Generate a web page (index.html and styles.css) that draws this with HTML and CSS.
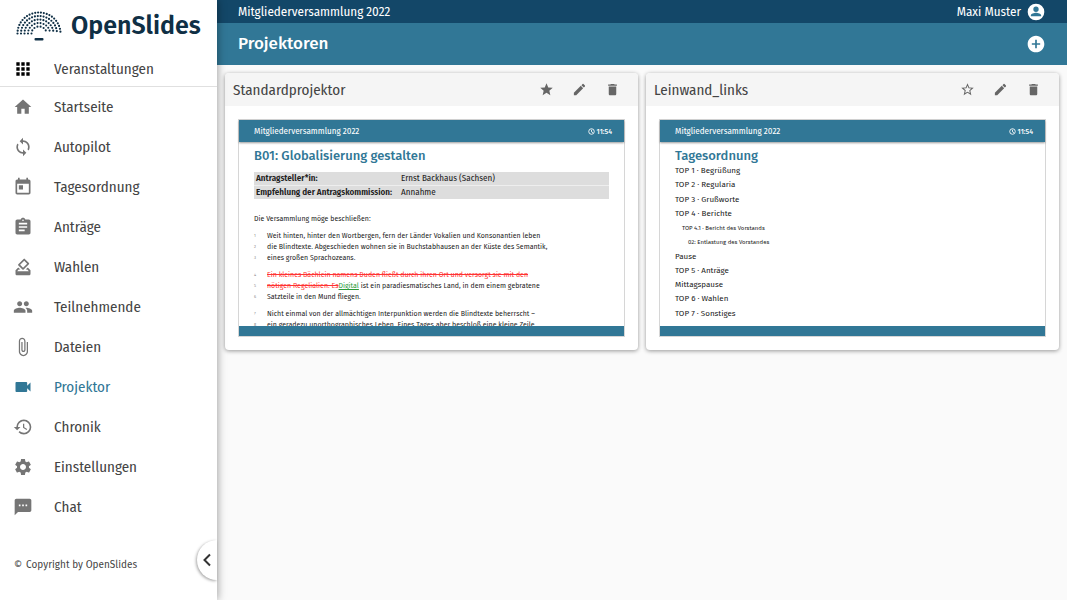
FILE: index.html
```html
<!DOCTYPE html>
<html lang="de">
<head>
<meta charset="utf-8">
<meta name="viewport" content="width=device-width, initial-scale=1">
<title>Projektoren – OpenSlides</title>
<link rel="stylesheet" href="styles.css">
</head>
<body>
<div class="app">
  <aside class="sidebar">
    <a class="brand" href="#">
      <svg class="brand-logo" viewBox="0 0 46 30" aria-hidden="true">
        <g fill="none" stroke="#0f2f45" stroke-linecap="round">
          <path stroke-width="2.200" stroke-dasharray="0 2.930" d="M1.500 22.500a21.500 21 0 0 1 43 0"/>
          <path stroke-width="2.200" stroke-dasharray="0 2.940" d="M5 22.500a18 17.500 0 0 1 36 0"/>
          <path stroke-width="2.200" stroke-dasharray="0 2.970" d="M8.500 22.500a14.500 14 0 0 1 29 0"/>
          <path stroke-width="2.100" stroke-dasharray="0 3.060" d="M12 22.500a11 10.500 0 0 1 22 0"/>
          <path stroke-width="2.100" stroke-dasharray="0 3.240" d="M15.500 22.500a7.500 7 0 0 1 15 0"/>
        </g>
        <rect x="18.500" y="27" width="9" height="2.500" rx="1" fill="#0f2f45"/>
      </svg>
      <span class="brand-name">OpenSlides</span>
    </a>
    <nav class="nav">
      <a class="nav-item nav-first" href="#"><svg viewBox="0 0 24 24"><path d="M4 8h4V4H4v4zm6 12h4v-4h-4v4zm-6 0h4v-4H4v4zm0-6h4v-4H4v4zm6 0h4v-4h-4v4zm6-10v4h4V4h-4zm-6 4h4V4h-4v4zm6 6h4v-4h-4v4zm0 6h4v-4h-4v4z"/></svg>Veranstaltungen</a>
      <a class="nav-item" href="#"><svg viewBox="0 0 24 24"><path d="M10 20v-6h4v6h5v-8h3L12 3 2 12h3v8z"/></svg>Startseite</a>
      <a class="nav-item" href="#"><svg viewBox="0 0 24 24"><path d="M12 4V1L8 5l4 4V6c3.310 0 6 2.690 6 6 0 1.010-.25 1.970-.7 2.800l1.460 1.460C19.540 15.030 20 13.570 20 12c0-4.420-3.580-8-8-8zm0 14c-3.310 0-6-2.690-6-6 0-1.010.25-1.970.7-2.800L5.240 7.740C4.460 8.970 4 10.430 4 12c0 4.420 3.580 8 8 8v3l4-4-4-4v3z"/></svg>Autopilot</a>
      <a class="nav-item" href="#"><svg viewBox="0 0 24 24"><path d="M19 3h-1V1h-2v2H8V1H6v2H5c-1.110 0-1.990.9-1.990 2L3 19c0 1.100.89 2 2 2h14c1.100 0 2-.9 2-2V5c0-1.100-.9-2-2-2zm0 16H5V8h14v11zM7 10h5v5H7z"/></svg>Tagesordnung</a>
      <a class="nav-item" href="#"><svg viewBox="0 0 24 24"><path d="M19 3h-4.180C14.400 1.840 13.300 1 12 1c-1.300 0-2.400.84-2.820 2H5c-1.100 0-2 .9-2 2v14c0 1.100.9 2 2 2h14c1.100 0 2-.9 2-2V5c0-1.100-.9-2-2-2zm-7 0c.55 0 1 .45 1 1s-.45 1-1 1-1-.45-1-1 .45-1 1-1zm2 14H7v-2h7v2zm3-4H7v-2h10v2zm0-4H7V7h10v2z"/></svg>Anträge</a>
      <a class="nav-item" href="#"><svg viewBox="0 0 24 24"><path d="M18 13h-.68l-2 2h1.910L19 17H5l1.780-2h2.050l-2-2H6l-3 3v4c0 1.100.89 2 1.990 2H19c1.100 0 2-.89 2-2v-4l-3-3zm-1-5.050l-4.950 4.950-3.540-3.540 4.950-4.950L17 7.950zm-4.240-5.660L6.390 8.660a1 1 0 0 0 0 1.410l4.950 4.950a1 1 0 0 0 1.410 0l6.360-6.360a1 1 0 0 0 0-1.410L14.160 2.300a.98.98 0 0 0-1.400-.01z"/></svg>Wahlen</a>
      <a class="nav-item" href="#"><svg viewBox="0 0 24 24"><path d="M16 11c1.660 0 2.990-1.340 2.990-3S17.660 5 16 5c-1.660 0-3 1.340-3 3s1.340 3 3 3zm-8 0c1.660 0 2.990-1.340 2.990-3S9.660 5 8 5C6.340 5 5 6.340 5 8s1.340 3 3 3zm0 2c-2.330 0-7 1.170-7 3.500V19h14v-2.500c0-2.330-4.670-3.500-7-3.500zm8 0c-.29 0-.62.02-.97.05 1.160.84 1.970 1.970 1.970 3.450V19h6v-2.500c0-2.330-4.670-3.500-7-3.500z"/></svg>Teilnehmende</a>
      <a class="nav-item" href="#"><svg viewBox="0 0 24 24"><path d="M16.500 6v11.500c0 2.210-1.790 4-4 4s-4-1.790-4-4V5c0-1.380 1.120-2.500 2.500-2.500s2.500 1.120 2.500 2.500v10.500c0 .55-.45 1-1 1s-1-.45-1-1V6H10v9.500c0 1.380 1.120 2.500 2.500 2.500s2.500-1.120 2.500-2.500V5c0-2.210-1.790-4-4-4S7 2.790 7 5v12.500c0 3.040 2.460 5.500 5.500 5.500s5.500-2.460 5.500-5.500V6h-1.500z"/></svg>Dateien</a>
      <a class="nav-item active" href="#" aria-current="page"><svg viewBox="0 0 24 24"><path d="M17 10.500V7c0-.55-.45-1-1-1H4c-.55 0-1 .45-1 1v10c0 .55.45 1 1 1h12c.55 0 1-.45 1-1v-3.500l4 4v-11l-4 4z"/></svg>Projektor</a>
      <a class="nav-item" href="#"><svg viewBox="0 0 24 24"><path d="M13 3a9 9 0 0 0-9 9H1l3.890 3.890.07.14L9 12H6c0-3.870 3.130-7 7-7s7 3.130 7 7-3.130 7-7 7c-1.930 0-3.680-.79-4.940-2.060l-1.420 1.420A8.950 8.950 0 0 0 13 21a9 9 0 0 0 0-18zm-1 5v5l4.280 2.540.72-1.210-3.500-2.080V8H12z"/></svg>Chronik</a>
      <a class="nav-item" href="#"><svg viewBox="0 0 24 24"><path d="M19.140 12.940c.04-.3.060-.61.060-.94 0-.32-.02-.64-.07-.94l2.030-1.580c.18-.14.23-.41.12-.61l-1.920-3.320c-.12-.22-.37-.29-.59-.22l-2.390.96c-.5-.38-1.030-.7-1.620-.94l-.36-2.540c-.04-.24-.24-.41-.48-.41h-3.840c-.24 0-.43.17-.47.41l-.36 2.540c-.59.24-1.130.57-1.620.94l-2.390-.96c-.22-.08-.47 0-.59.22L2.740 8.870c-.12.21-.08.47.12.61l2.030 1.580c-.05.3-.09.63-.09.94s.02.64.07.94l-2.030 1.580c-.18.14-.23.41-.12.61l1.920 3.320c.12.22.37.29.59.22l2.390-.96c.5.38 1.030.7 1.620.94l.36 2.540c.05.24.24.41.48.41h3.840c.24 0 .44-.17.47-.41l.36-2.540c.59-.24 1.130-.56 1.620-.94l2.390.96c.22.08.47 0 .59-.22l1.920-3.320c.12-.22.07-.47-.12-.61l-2.010-1.580zM12 15.600c-1.980 0-3.600-1.620-3.600-3.600s1.620-3.600 3.600-3.600 3.600 1.620 3.600 3.600-1.620 3.600-3.600 3.600z"/></svg>Einstellungen</a>
      <a class="nav-item" href="#"><svg viewBox="0 0 24 24"><path d="M20 2H4c-1.100 0-1.990.9-1.990 2L2 22l4-4h14c1.100 0 2-.9 2-2V4c0-1.100-.9-2-2-2zM9 11H7V9h2v2zm4 0h-2V9h2v2zm4 0h-2V9h2v2z"/></svg>Chat</a>
    </nav>
    <a class="copyright" href="#"><span>©</span><span>Copyright by OpenSlides</span></a>
    <button class="collapse" type="button" aria-label="Menü einklappen"><svg viewBox="0 0 10 14"><path d="M8 1.500 2.500 7 8 12.500" fill="none" stroke="#333" stroke-width="2"/></svg></button>
  </aside>

  <div class="content">
    <header>
      <div class="topbar">
        <span>Mitgliederversammlung 2022</span>
        <button class="account" type="button">Maxi Muster
          <svg viewBox="0 0 24 24"><path fill="#fff" d="M12 2a10 10 0 1 0 0 20 10 10 0 0 0 0-20z"/><path fill="#317796" d="M12 5.500a3.200 3.200 0 1 1 0 6.400 3.200 3.200 0 0 1 0-6.400zM5.800 16.200c0-2.100 4.100-3.200 6.200-3.200s6.200 1.100 6.200 3.200v1H5.800z"/></svg>
        </button>
      </div>
      <div class="titlebar">
        <h1>Projektoren</h1>
        <button class="add" type="button" aria-label="Neuer Projektor"><svg viewBox="0 0 24 24"><path d="M12 2C6.480 2 2 6.480 2 12s4.480 10 10 10 10-4.480 10-10S17.520 2 12 2zm5 11h-4v4h-2v-4H7v-2h4V7h2v4h4v2z"/></svg></button>
      </div>
    </header>

    <main class="projectors">
      <section class="card">
        <div class="card-head">
          <h2>Standardprojektor</h2>
          <button type="button" aria-label="Standardprojektor"><svg viewBox="0 0 24 24"><path d="M12 17.270L18.180 21l-1.640-7.030L22 9.240l-7.190-.61L12 2 9.190 8.630 2 9.240l5.460 4.730L5.820 21z"/></svg></button>
          <button type="button" aria-label="Bearbeiten"><svg viewBox="0 0 24 24"><path d="M3 17.250V21h3.750L17.810 9.940l-3.750-3.750L3 17.250zM20.710 7.040a1 1 0 0 0 0-1.410l-2.340-2.340a1 1 0 0 0-1.410 0l-1.830 1.830 3.750 3.750 1.830-1.830z"/></svg></button>
          <button type="button" aria-label="Löschen"><svg viewBox="0 0 24 24"><path d="M6 19c0 1.100.9 2 2 2h8c1.100 0 2-.9 2-2V7H6v12zM19 4h-3.500l-1-1h-5l-1 1H5v2h14V4z"/></svg></button>
        </div>
        <div class="card-body">
          <div class="slide">
            <div class="slide-head">
              <span>Mitgliederversammlung 2022</span>
              <span class="clock"><svg viewBox="0 0 24 24"><circle cx="12" cy="12" r="9.500"/><path d="M12 6v7l5 3"/></svg>11:54</span>
            </div>
            <div class="slide-body">
              <h3>B01: Globalisierung gestalten</h3>
              <table class="meta">
                <tr><th scope="row">Antragsteller*in:</th><td>Ernst Backhaus (Sachsen)</td></tr>
                <tr><th scope="row">Empfehlung der Antragskommission:</th><td>Annahme</td></tr>
              </table>
              <p class="preamble">Die Versammlung möge beschließen:</p>
              <div class="motion">
                <div class="para">
                  <div class="line"><span class="num">1</span><span>Weit hinten, hinter den Wortbergen, fern der Länder Vokalien und Konsonantien leben</span></div>
                  <div class="line"><span class="num">2</span><span>die Blindtexte. Abgeschieden wohnen sie in Buchstabhausen an der Küste des Semantik,</span></div>
                  <div class="line"><span class="num">3</span><span>eines großen Sprachozeans.</span></div>
                </div>
                <div class="para">
                  <div class="line"><span class="num">4</span><del>Ein kleines Bächlein namens Duden fließt durch ihren Ort und versorgt sie mit den</del></div>
                  <div class="line"><span class="num">5</span><span><del>nötigen Regelialien. Es</del><ins>Digital</ins> ist ein paradiesmatisches Land, in dem einem gebratene</span></div>
                  <div class="line"><span class="num">6</span><span>Satzteile in den Mund fliegen.</span></div>
                </div>
                <div class="para">
                  <div class="line"><span class="num">7</span><span>Nicht einmal von der allmächtigen Interpunktion werden die Blindtexte beherrscht –</span></div>
                  <div class="line"><span class="num">8</span><span>ein geradezu unorthographisches Leben. Eines Tages aber beschloß eine kleine Zeile</span></div>
                </div>
              </div>
            </div>
            <div class="slide-foot"></div>
          </div>
        </div>
      </section>

      <section class="card">
        <div class="card-head">
          <h2>Leinwand_links</h2>
          <button type="button" aria-label="Als Standard setzen"><svg viewBox="0 0 24 24"><path d="M22 9.240l-7.190-.62L12 2 9.190 8.630 2 9.240l5.460 4.730L5.820 21 12 17.270 18.180 21l-1.630-7.030L22 9.240zM12 15.400l-3.760 2.270 1-4.280-3.320-2.880 4.380-.38L12 6.100l1.710 4.040 4.380.38-3.320 2.880 1 4.280L12 15.400z"/></svg></button>
          <button type="button" aria-label="Bearbeiten"><svg viewBox="0 0 24 24"><path d="M3 17.250V21h3.750L17.810 9.940l-3.750-3.750L3 17.250zM20.710 7.040a1 1 0 0 0 0-1.410l-2.340-2.340a1 1 0 0 0-1.410 0l-1.830 1.830 3.750 3.750 1.830-1.830z"/></svg></button>
          <button type="button" aria-label="Löschen"><svg viewBox="0 0 24 24"><path d="M6 19c0 1.100.9 2 2 2h8c1.100 0 2-.9 2-2V7H6v12zM19 4h-3.500l-1-1h-5l-1 1H5v2h14V4z"/></svg></button>
        </div>
        <div class="card-body">
          <div class="slide">
            <div class="slide-head">
              <span>Mitgliederversammlung 2022</span>
              <span class="clock"><svg viewBox="0 0 24 24"><circle cx="12" cy="12" r="9.500"/><path d="M12 6v7l5 3"/></svg>11:54</span>
            </div>
            <div class="slide-body">
              <h3>Tagesordnung</h3>
              <ul class="agenda">
                <li>TOP 1 · Begrüßung</li>
                <li>TOP 2 · Regularia</li>
                <li>TOP 3 · Grußworte</li>
                <li>TOP 4 · Berichte</li>
                <li class="sub">TOP 4.1 · Bericht des Vorstands</li>
                <li class="subsub">02: Entlastung des Vorstandes</li>
                <li>Pause</li>
                <li>TOP 5 · Anträge</li>
                <li>Mittagspause</li>
                <li>TOP 6 · Wahlen</li>
                <li>TOP 7 · Sonstiges</li>
              </ul>
            </div>
            <div class="slide-foot"></div>
          </div>
        </div>
      </section>
    </main>
  </div>
</div>
</body>
</html>
```
FILE: styles.css
```css
* { box-sizing: border-box; }

body {
  margin: 0;
  background: #fafafa;
  color: #444;
  font: 15px/20px "Fira Sans Condensed", "Fira Sans", "Noto Sans", sans-serif;
}

h1, h2, h3, p, ul { margin: 0; padding: 0; }
a { color: inherit; text-decoration: none; }

button {
  border: 0;
  padding: 0;
  background: none;
  color: inherit;
  font: inherit;
  cursor: pointer;
}

svg { display: block; flex: none; fill: currentColor; }

.app { display: flex; min-height: 100vh; }

/* Sidebar */
.sidebar {
  position: relative;
  z-index: 1;
  display: flex;
  flex: none;
  flex-direction: column;
  width: 217px;
  background: #fff;
  box-shadow: 1px 0 8px rgba(0, 0, 0, 0.35);
}

.brand {
  display: flex;
  align-items: center;
  gap: 9px;
  height: 52px;
  padding: 0 16px;
  color: #0f2f45;
}

.brand-logo { width: 46px; height: 30px; }

.brand-name {
  font-family: "Fira Sans", "Open Sans", sans-serif;
  font-size: 25px;
  line-height: 48px;
  font-weight: 600;
}

.nav { display: flex; flex-direction: column; }

.nav-item {
  display: flex;
  align-items: center;
  gap: 21px;
  height: 40px;
  padding: 0 13px;
}

.nav-item svg { width: 20px; height: 20px; color: #757575; }

.nav-first {
  height: 35px;
  border-bottom: 1px solid #e0e0e0;
}

.nav-item.nav-first svg { color: #000; }
.nav-item.active, .nav-item.active svg { color: #317796; }

.copyright {
  display: flex;
  gap: 4px;
  margin: 28px 14px 12px;
  font-family: "Fira Sans", "Noto Sans", sans-serif;
  font-size: 10px;
}

.collapse {
  position: absolute;
  right: 0;
  bottom: 20px;
  display: flex;
  align-items: center;
  justify-content: center;
  width: 20px;
  height: 40px;
  border-radius: 20px 0 0 20px;
  background: #fff;
  box-shadow: -1px 1px 3px rgba(0, 0, 0, 0.35);
}

.collapse svg { width: 10px; height: 14px; }

/* Header */
.content { flex: 1; min-width: 0; }

.topbar, .titlebar {
  display: flex;
  align-items: center;
  justify-content: space-between;
  padding: 0 21px;
  color: #fff;
}

.topbar { height: 23px; background: #134768; font-size: 13px; }
.titlebar { height: 42px; background: #317796; }

.titlebar h1 {
  font-family: "Fira Sans", "Noto Sans", sans-serif;
  font-size: 17px;
  font-weight: 500;
}

.account { display: flex; align-items: center; gap: 5px; }
.account svg, .add svg { width: 20px; height: 20px; }

/* Projector cards */
.projectors {
  display: grid;
  grid-template-columns: repeat(2, minmax(0, 1fr));
  gap: 8px;
  padding: 8px;
}

.card {
  overflow: hidden;
  border-radius: 4px;
  background: #fff;
  box-shadow: 0 1px 4px rgba(0, 0, 0, 0.4);
}

.card-head {
  display: flex;
  align-items: center;
  gap: 18px;
  height: 33px;
  padding: 0 18px 0 8px;
  background: #f5f5f5;
}

.card-head h2 {
  flex: 1;
  font-size: 15px;
  font-weight: 400;
}

.card-head svg { width: 15px; height: 15px; color: #666; }

.card-body { padding: 13px; }

.slide {
  display: flex;
  flex-direction: column;
  aspect-ratio: 16 / 9;
  border: 1px solid #d6d6d6;
  color: #222;
  font-family: "Fira Sans", "Noto Sans", sans-serif;
  font-size: 7px;
  line-height: 11px;
}

.slide-head {
  display: flex;
  flex: none;
  align-items: center;
  justify-content: space-between;
  height: 22px;
  padding: 0 12px 0 15px;
  background: #317796;
  box-shadow: 0 1px 2px rgba(0, 0, 0, 0.4);
  color: #fff;
  font-family: "Fira Sans Condensed", "Fira Sans", sans-serif;
  font-size: 9px;
}

.clock {
  display: flex;
  align-items: center;
  gap: 2px;
  font-family: "Fira Sans", "Noto Sans", sans-serif;
  font-size: 7px;
  font-weight: 500;
}

.clock svg {
  width: 7px;
  height: 7px;
  fill: none;
  stroke: currentColor;
  stroke-width: 3;
}

.slide-body {
  display: flex;
  flex: 1;
  flex-direction: column;
  min-height: 0;
  overflow: hidden;
  padding: 5px 15px;
  white-space: nowrap;
}

.slide-body > * { flex: none; }

.slide-body h3 {
  color: #317796;
  font-size: 13px;
  line-height: 17px;
  font-weight: 500;
}

.slide-foot { flex: none; height: 10px; background: #317796; }

.meta {
  width: 100%;
  margin: 8px 0 14px;
  border-collapse: collapse;
  font-family: "Fira Sans Condensed", "Fira Sans", sans-serif;
  font-size: 9px;
  line-height: 13px;
}

.meta tr { background: #ddd; }
.meta tr + tr { border-top: 1px solid #eee; }

.meta th, .meta td {
  padding: 0 2px;
  text-align: left;
}

.meta th { width: 145px; font-weight: 600; }
.meta td { font-weight: 400; }

.motion {
  display: flex;
  flex-direction: column;
  gap: 6px;
  margin-top: 6px;
}

.line { display: flex; }

.num {
  width: 13px;
  color: #888;
  font-size: 4px;
}

del { color: #f33; }
ins { color: #2a9a3a; }

.slide-body .agenda {
  display: flex;
  flex: 1;
  flex-direction: column;
  justify-content: space-between;
  font-size: 8px;
  line-height: 14px;
  list-style: none;
}

.agenda .sub { padding-left: 7px; font-size: 6px; }
.agenda .subsub { padding-left: 13px; font-size: 6px; }
```
